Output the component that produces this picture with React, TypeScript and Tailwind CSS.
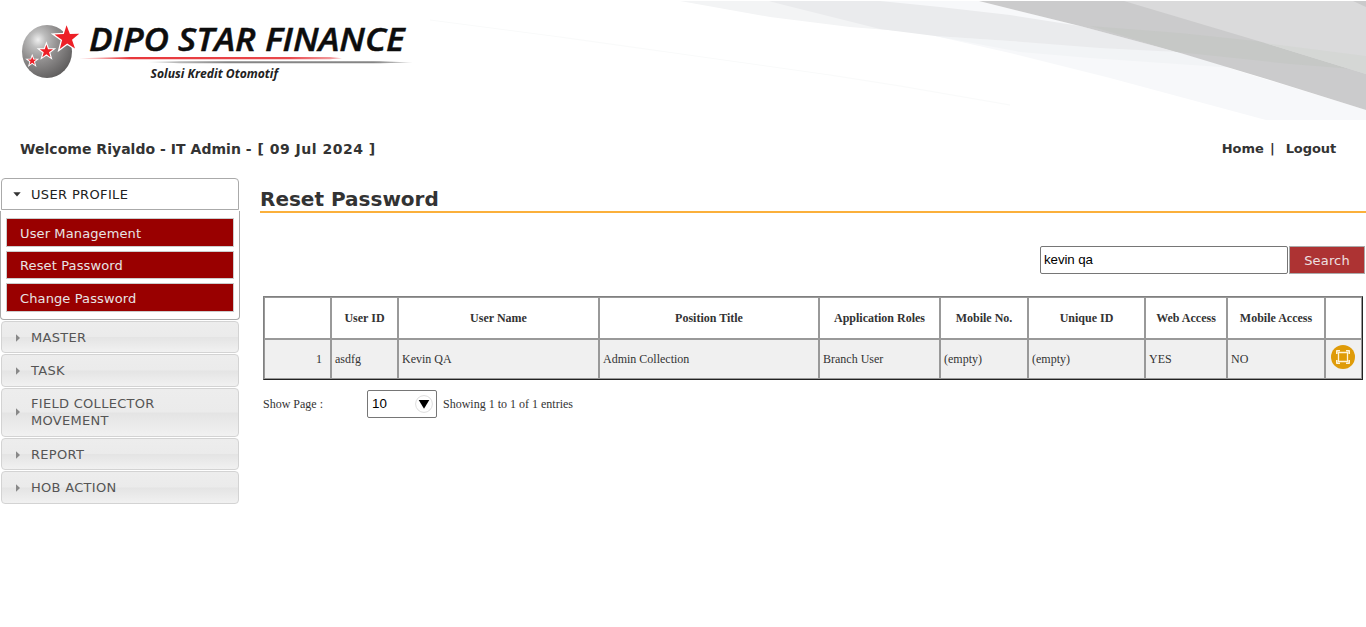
import React from 'react';

const starPoints = (cx: number, cy: number, r: number, tilt = -90): string =>
  Array.from({ length: 10 }, (_, i) => {
    const radius = i % 2 === 0 ? r : r * 0.4;
    const a = ((tilt + i * 36) * Math.PI) / 180;
    return `${(cx + radius * Math.cos(a)).toFixed(2)},${(cy + radius * Math.sin(a)).toFixed(2)}`;
  }).join(' ');

function Logo() {
  return (
    <svg width="420" height="90" viewBox="0 0 420 90" className="relative block">
      <defs>
        <radialGradient id="ball" cx="0.32" cy="0.28" r="0.78">
          <stop offset="0" stopColor="#efefef" />
          <stop offset="0.2" stopColor="#bdbdbd" />
          <stop offset="0.5" stopColor="#929090" />
          <stop offset="1" stopColor="#5f5d5d" />
        </radialGradient>
        <linearGradient id="redLine" x1="0" x2="1" y1="0" y2="0">
          <stop offset="0" stopColor="#e8383c" stopOpacity="0.4" />
          <stop offset="0.2" stopColor="#e8383c" />
          <stop offset="0.8" stopColor="#e8484c" />
          <stop offset="1" stopColor="#e8585c" stopOpacity="0.5" />
        </linearGradient>
        <linearGradient id="grayLine" x1="0" x2="1" y1="0" y2="0">
          <stop offset="0" stopColor="#808080" stopOpacity="0.3" />
          <stop offset="0.3" stopColor="#858585" />
          <stop offset="0.85" stopColor="#858585" />
          <stop offset="1" stopColor="#808080" stopOpacity="0.3" />
        </linearGradient>
      </defs>
      <ellipse cx="47" cy="51.5" rx="25" ry="26.5" fill="url(#ball)" />
      <g fill="#ed1f26" stroke="#fff" strokeLinejoin="miter">
        <polygon points={starPoints(67, 38.2, 13, -92)} strokeWidth="2.6" paintOrder="stroke" />
        <polygon points={starPoints(46.4, 51.5, 7, -90)} strokeWidth="2.2" paintOrder="stroke" />
        <polygon points={starPoints(32.2, 61, 4.6, -90)} strokeWidth="1.8" paintOrder="stroke" />
      </g>
      <path d="M79 58.2 L130 57 H330 L342 58.2 L330 59.2 H130 Z" fill="url(#redLine)" />
      <path d="M148 61.9 L180 61.2 H380 L413 62.5 L380 63.2 H180 Z" fill="url(#grayLine)" />
      <text x="89" y="51" textLength="315.5" lengthAdjust="spacingAndGlyphs" fontFamily="'Open Sans', sans-serif" fontStyle="italic" fontWeight="600" fontSize="32" fill="#0d0d0d" stroke="#0d0d0d" strokeWidth="0.5">
        DIPO STAR FINANCE
      </text>
      <text x="150.5" y="78" textLength="127.5" lengthAdjust="spacingAndGlyphs" fontFamily="'Open Sans', sans-serif" fontStyle="italic" fontWeight="700" fontSize="11.5" fill="#222">
        Solusi Kredit Otomotif
      </text>
    </svg>
  );
}

function HeaderArt() {
  return (
    <svg width="1366" height="120" viewBox="0 0 1366 120" className="absolute left-0 top-0">
      <path d="M680 1 H768 L830 14 L900 31 L850 27 L770 17 Z" fill="#f3f4f5" />
      <path d="M870 1 H979 L1080 26 L1177 52 L1366 110 V120 H1266 L1110 78 L1010 53 L935 36 L1000 20 Z" fill="#f7f8fa" />
      <path d="M935 36 L1010 41 L1177 52 L1235 68 L1090 58 L1020 52 Z" fill="#f2f4f6" />
      <path d="M768 1 H880 L940 7 L1010 15 L1080 26 L1177 52 L1100 48 L1010 41 L935 36 L880 29 Z" fill="#eaebed" />
      <path d="M979 1 H1366 V110 L1270 80 L1177 52 L1080 26 Z" fill="#cbcbcc" />
      <path d="M1090 26 L1180 33 L1265 42 L1366 56 V70 L1290 64 L1177 52 Z" fill="#c6c8c6" />
      <path d="M1124 1 H1366 V74 L1265 43 Z" fill="#dadadb" />
      <path d="M1265 43 L1366 56 V74 Z" fill="#d5d7d5" />
      <path d="M1353 1 H1366 V7 Z" fill="#cacacb" />
      <path d="M430 20 L560 37 L660 51 L830 75 L900 86 L1010 105" fill="none" stroke="#f9fafa" />
    </svg>
  );
}

const heading = 'flex items-center rounded-[4px] border border-[#d3d3d3] bg-[linear-gradient(to_bottom,#ededed_0%,#ebebeb_49%,#e4e4e4_51%,#f1f1f1_100%)] pl-[13px] tracking-[0.3px] text-[#555]';

function Group({ label, size }: { label: React.ReactNode; size: string }) {
  return (
    <div className={`${heading} ${size}`}>
      <svg width="6" height="8" viewBox="0 0 6 8" className="mr-[10px] mt-px shrink-0">
        <path d="M1 0.3 L5 4 L1 7.7 Z" fill="#888" />
      </svg>
      <span>{label}</span>
    </div>
  );
}

function Sidebar() {
  return (
    <nav className="w-[240px] text-[13px] leading-[17px]">
      <div className="ml-px flex h-8 w-[238px] items-center rounded-t-[4px] border border-[#aaa] pl-[11px] tracking-[0.35px] text-[#212121]">
        <svg width="8" height="5" viewBox="0 0 8 5" className="mr-[10px] shrink-0">
          <path d="M0.3 0.3 H7.7 L4 4.5 Z" fill="#333" />
        </svg>
        USER PROFILE
      </div>
      <div className="mt-px flex h-[109px] flex-col gap-1 rounded-b-[4px] border border-t-0 border-[#aaa] pl-[5px] pt-[7px] tracking-[0.12px] text-[#e8e4e4]">
        <div className="flex h-[29px] w-[228px] items-center border border-[#ccc] bg-[#990000] pl-[13px] pt-[2px]">User Management</div>
        <div className="flex h-[28px] w-[228px] items-center border border-[#ccc] bg-[#990000] pl-[13px]">Reset Password</div>
        <div className="flex h-[29px] w-[228px] items-center border border-[#ccc] bg-[#990000] pl-[13px] pt-[2px]">Change Password</div>
      </div>
      <div className="ml-px mt-px flex flex-col gap-px">
        <Group label="MASTER" size="h-8 w-[238px]" />
        <Group label="TASK" size="h-[33px] w-[238px]" />
        <Group label={<>FIELD COLLECTOR<br />MOVEMENT</>} size="h-[49px] w-[238px] pb-[2px]" />
        <Group label="REPORT" size="h-8 w-[238px]" />
        <Group label="HOB ACTION" size="h-[33px] w-[238px]" />
      </div>
    </nav>
  );
}

const columns = ['', 'User ID', 'User Name', 'Position Title', 'Application Roles', 'Mobile No.', 'Unique ID', 'Web Access', 'Mobile Access', ''];
const row = ['asdfg', 'Kevin QA', 'Admin Collection', 'Branch User', '(empty)', '(empty)', 'YES', 'NO'];

function UserTable() {
  return (
    <div className="w-[1100px] border border-b-[#222] border-l-[#808080] border-r-[#222] border-t-[#808080] bg-[#999] p-px">
      <div className="grid grid-cols-[65px_65px_199px_218px_119px_86px_115px_80px_96px_35px] grid-rows-[40px_38px] gap-[2px]">
        {columns.map((c, i) => (
          <div key={i} className="flex items-center justify-center whitespace-nowrap bg-white pb-px font-bold">{c}</div>
        ))}
        <div className="flex items-center justify-end bg-[#f0f0f0] pr-2">1</div>
        {row.map((c, i) => (
          <div key={i} className="flex items-center whitespace-nowrap bg-[#f0f0f0] pl-[3px]">{c}</div>
        ))}
        <div className="flex items-start bg-[#f0f0f0] pl-[5px] pt-[5px]">
          <svg width="24" height="24" viewBox="0 0 24 24" className="shrink-0">
            <circle cx="12" cy="12" r="12" fill="#df9b08" />
            <g fill="none" stroke="#fff3d8">
              <path d="M7.5 7.5 H16.5 V16.5 H7.5 Z" strokeWidth="1.3" />
              <path d="M5.8 9 V5.8 H9 M15 5.8 H18.2 V9 M5.8 15 V18.2 H9 M15 18.2 H18.2 V15" strokeWidth="1.6" strokeLinejoin="round" />
            </g>
          </svg>
        </div>
      </div>
    </div>
  );
}

export default function App() {
  return (
    <div className="h-[627px] w-[1366px] overflow-hidden bg-white font-['DejaVu_Sans',Verdana,sans-serif] text-[#333]">
      <header className="relative h-[120px]">
        <HeaderArt />
        <Logo />
      </header>
      <div className="flex h-[58px] items-center justify-between pl-5 pr-[30px] text-[13px] font-bold">
        <span className="whitespace-pre text-[14px] tracking-[0.03px]">
          {'Welcome Riyaldo - IT Admin '}
          <span className="tracking-[0.5px]">- [ 09 Jul 2024 ]</span>
        </span>
        <div className="flex">
          <a className="mr-[6px]">Home</a>
          <span className="mr-[11px]">|</span>
          <a className="tracking-[-0.1px]">Logout</a>
        </div>
      </div>
      <div className="flex">
        <Sidebar />
        <main className="ml-5 w-[1106px]">
          <h1 className="h-[35px] border-b-2 border-[#fbb03b] pt-[9px] text-[20px] font-bold leading-6">Reset Password</h1>
          <div className="mt-[33px] flex justify-end gap-px pr-px">
            <input
              defaultValue="kevin qa"
              className="h-7 w-[248px] rounded-[2px] border border-[#767676] bg-white px-[3px] pb-[2px] font-['Liberation_Sans',sans-serif] text-[13.333px] tracking-[-0.1px] text-black outline-none"
            />
            <button className="h-7 w-[76px] border border-[#aaa] bg-[#ad3333] pt-[2px] text-[13px] tracking-[0.15px] text-[#eee0e0]">Search</button>
          </div>
          <div className="ml-[3px] mt-[22px] font-['Liberation_Serif',serif] text-[12px] leading-[14px]">
            <UserTable />
            <div className="mt-[10px] flex h-7 items-center">
              <span className="w-[104px]">Show Page :</span>
              <div className="flex h-7 w-[70px] items-center justify-between rounded-[2px] border border-[#767676] pl-1 pr-[3px] font-['Liberation_Sans',sans-serif] text-[13.333px] text-black">
                10
                <svg width="18" height="18" viewBox="0 0 18 18">
                  <circle cx="9" cy="9" r="8.4" fill="#fff" stroke="#ddd" />
                  <path d="M3.7 5 H14.3 L9 13.8 Z" fill="#000" />
                </svg>
              </div>
              <span className="ml-[6px]">Showing 1 to 1 of 1 entries</span>
            </div>
          </div>
        </main>
      </div>
    </div>
  );
}
